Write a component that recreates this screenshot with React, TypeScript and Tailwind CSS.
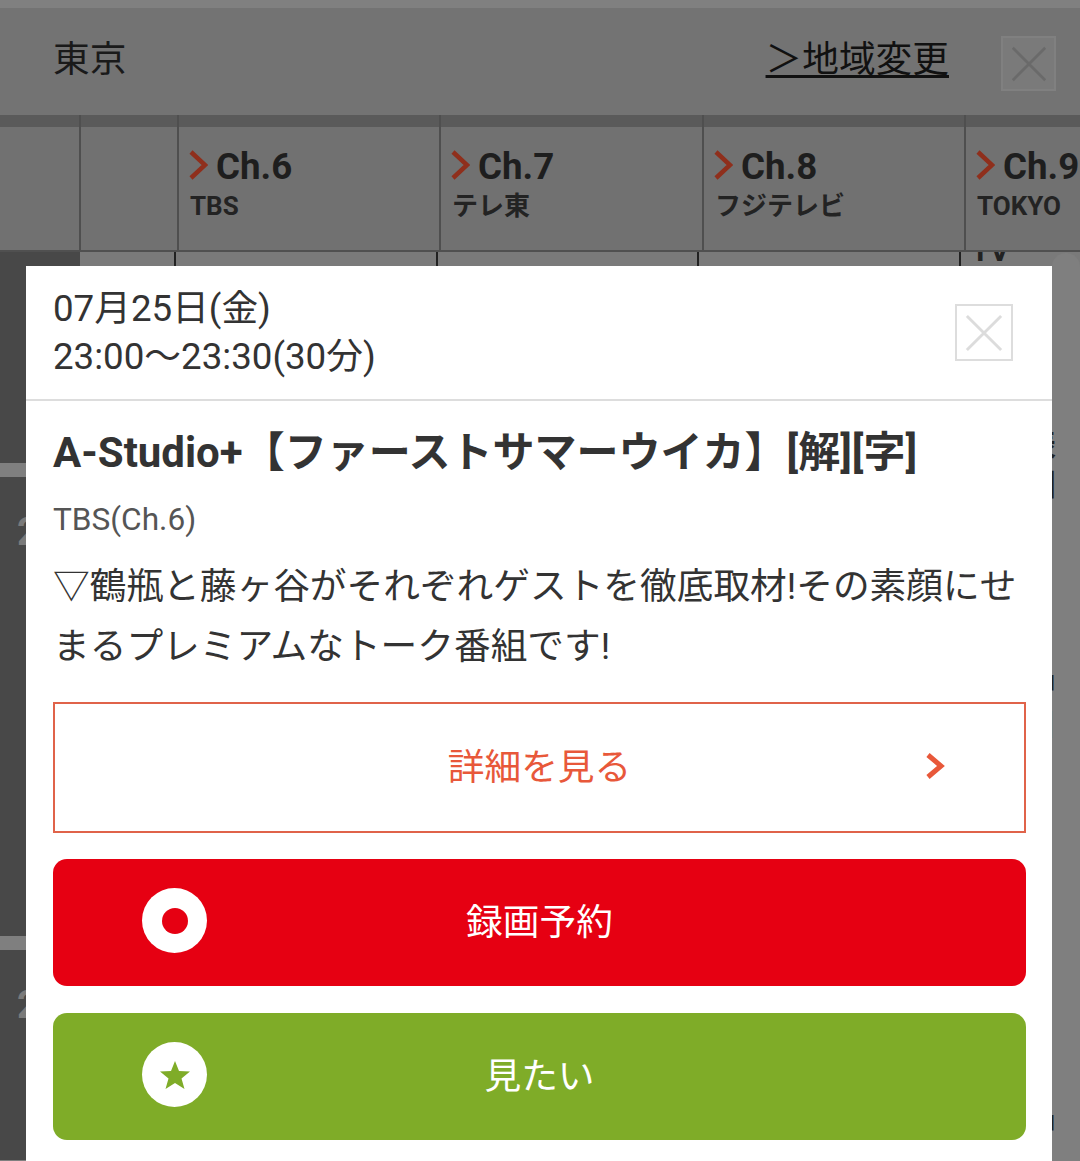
const sans = "font-['Roboto','Noto_Sans_CJK_JP',sans-serif]";

const channels = [
  { ch: "Ch.6", name: "TBS", w: "w-[262px]" },
  { ch: "Ch.7", name: "テレ東", w: "w-[263px]" },
  { ch: "Ch.8", name: "フジテレビ", w: "w-[262px]" },
  { ch: "Ch.9", name: "TOKYO", w: "w-[116px]" },
];

function CloseIcon({ color, size }: { color: string; size: number }) {
  return (
    <svg width={size} height={size} viewBox="0 0 40 40" fill="none" stroke={color} strokeWidth="3">
      <path d="M2 2 38 38M38 2 2 38" />
    </svg>
  );
}

function ChannelHead({ ch, name, w }: { ch: string; name: string; w: string }) {
  return (
    <div className={`${w} shrink-0 border-l-2 border-[#4f4f4f] h-full pl-[11px] pt-[22px]`}>
      <div className="flex items-center gap-[8px] h-[36px] -ml-[1px]">
        <svg className="-mt-[4px]" width="19" height="30" viewBox="0 0 19 30" fill="none" stroke="#8f2f1c" strokeWidth="4.5">
          <path d="M2 2 16 15 2 28" />
        </svg>
        <span className="text-[36.7px] font-bold text-[#1e1e1e] leading-none whitespace-nowrap">{ch}</span>
      </div>
      <p className="text-[26px] font-bold text-[#232323] leading-none mt-[8px] whitespace-nowrap">{name}</p>
    </div>
  );
}

function ActionCircle({ children }: { children: React.ReactNode }) {
  return (
    <span className="absolute left-[89px] top-[29px] w-[65px] h-[65px] rounded-full bg-white flex items-center justify-center">
      {children}
    </span>
  );
}

export default function App() {
  return (
    <div className={`relative w-[1080px] h-[1161px] overflow-hidden bg-[#7f7f7f] ${sans}`}>
      {/* page behind the overlay */}
      <div className="h-[8px] bg-[#808080]" />
      <div className="h-[107px] bg-[#737373] flex items-start pl-[53px] pr-[24px]">
        <span className="text-[36.7px] leading-none text-[#1a1a1a] mt-[34px]">東京</span>
        <a className="ml-auto mt-[32px] text-[36.7px] leading-[40px] text-[#111] underline decoration-[3px] underline-offset-[3px] whitespace-nowrap">
          ＞地域変更
        </a>
        <button className="ml-[52px] mt-[28px] w-[55px] h-[55px] bg-[#7a7a7a] border-2 border-[#808080] flex items-center justify-center">
          <CloseIcon color="#6a6a6a" size={36} />
        </button>
      </div>
      <div className="h-[12px] bg-[#5a5a5a] flex pl-[79px]">
        {[98, 262, 263, 262].map((w, i) => (
          <div key={i} className="border-l-2 border-[#4f4f4f]" style={{ width: w }} />
        ))}
        <div className="border-l-2 border-[#4f4f4f]" />
      </div>
      <div className="h-[125px] bg-[#717171] flex pl-[79px] border-b-2 border-[#505050]">
        <div className="w-[98px] shrink-0 border-l-2 border-[#4f4f4f] h-full" />
        {channels.map((c) => (
          <ChannelHead key={c.ch} {...c} />
        ))}
      </div>
      <div className="flex h-[908px]">
        <div className="w-[80px] shrink-0 bg-[#484848] flex flex-col">
          <div className="h-[211px] shrink-0" />
          <div className="h-[14px] shrink-0 bg-[#7f7f7f]" />
          <div className="h-[459px] shrink-0 pl-[17px] pt-[36px] text-[38px] font-bold leading-none text-[#7a7a7a]">2</div>
          <div className="h-[14px] shrink-0 bg-[#7f7f7f]" />
          <div className="pl-[17px] pt-[36px] text-[38px] font-bold leading-none text-[#7a7a7a]">2</div>
        </div>
        <div className="flex-1 flex h-[14px] bg-[#7a7a7a]">
          <div className="w-[96px] border-r-2 border-[#222]" />
          <div className="w-[262px] border-r-2 border-[#222]" />
          <div className="w-[261px] border-r-2 border-[#222]" />
          <div className="w-[262px] border-r-2 border-[#222]" />
          <div className="overflow-hidden">
            <span className="block pl-[10px] -mt-[16px] text-[30px] font-bold leading-none text-[#222] whitespace-nowrap">TV</span>
          </div>
        </div>
      </div>

      {/* scrollbar track at the right of the dialog */}
      <div className="absolute left-[1052px] top-[253px] w-[28px] h-[908px] rounded-t-[14px] bg-[#7f7f7f]" />

      {/* listing text that pokes out from under the dialog */}
      <div className="absolute left-[966px] top-[425px] w-[90px] overflow-hidden text-[30px] leading-[40px] font-bold text-[#222] whitespace-pre">
        {"番組表\n情報国\n\n\n\n\n放送中\n番組目\n\n\n\n\n\n\n\n\n\n放送中"}
      </div>

      {/* dialog */}
      <div className="absolute left-[26px] top-[266px] w-[1026px] h-[895px] bg-white text-[#333]">
        <div className="relative h-[135px] border-b-2 border-[#ddd] pl-[27px] pt-[19px] text-[36.7px] leading-[48px]">
          <p>07月25日(金)</p>
          <p>23:00〜23:30(30分)</p>
          <button className="absolute left-[929px] top-[38px] w-[58px] h-[57px] border-2 border-[#ddd] flex items-center justify-center">
            <CloseIcon color="#dcdcdc" size={38} />
          </button>
        </div>
        <div className="px-[27px]">
          <h2 className="mt-[28px] text-[42px] leading-[48px] font-bold text-[#333] whitespace-nowrap">
            A-Studio+【ファーストサマーウイカ】[解][字]
          </h2>
          <p className="mt-[23px] text-[31.6px] leading-[40px] text-[#555]">TBS(Ch.6)</p>
          <p className="mt-[17px] text-[36.7px] leading-[60px] text-[#333]">
            ▽鶴瓶と藤ヶ谷がそれぞれゲストを徹底取材!その素顔にせまるプレミアムなトーク番組です!
          </p>
          <div className="mt-[25px] w-[973px] flex flex-col">
            <a className="relative h-[131px] border-2 border-[#e0634a] flex items-center justify-center text-[36.7px] text-[#e8583a]">
              詳細を見る
              <svg className="absolute left-[870px] top-[49px]" width="20" height="26" viewBox="0 0 20 26" fill="none" stroke="#e8583a" strokeWidth="5">
                <path d="M3 2 16 13 3 24" />
              </svg>
            </a>
            <a className="relative mt-[26px] h-[127px] rounded-[14px] bg-[#e60012] flex items-center justify-center text-[36.7px] text-white">
              録画予約
              <ActionCircle>
                <span className="w-[26px] h-[26px] rounded-full bg-[#e60012]" />
              </ActionCircle>
            </a>
            <a className="relative mt-[27px] h-[127px] rounded-[14px] bg-[#7fac28] flex items-center justify-center text-[36.7px] text-white">
              見たい
              <ActionCircle>
                <svg width="30" height="28" viewBox="0 0 30 28" fill="#7fac28">
                  <path d="M15 0 19 10 30 10.500 21.500 17.500 24.500 28 15 22 5.500 28 8.500 17.500 0 10.500 11 10Z" />
                </svg>
              </ActionCircle>
            </a>
          </div>
        </div>
      </div>
    </div>
  );
}
